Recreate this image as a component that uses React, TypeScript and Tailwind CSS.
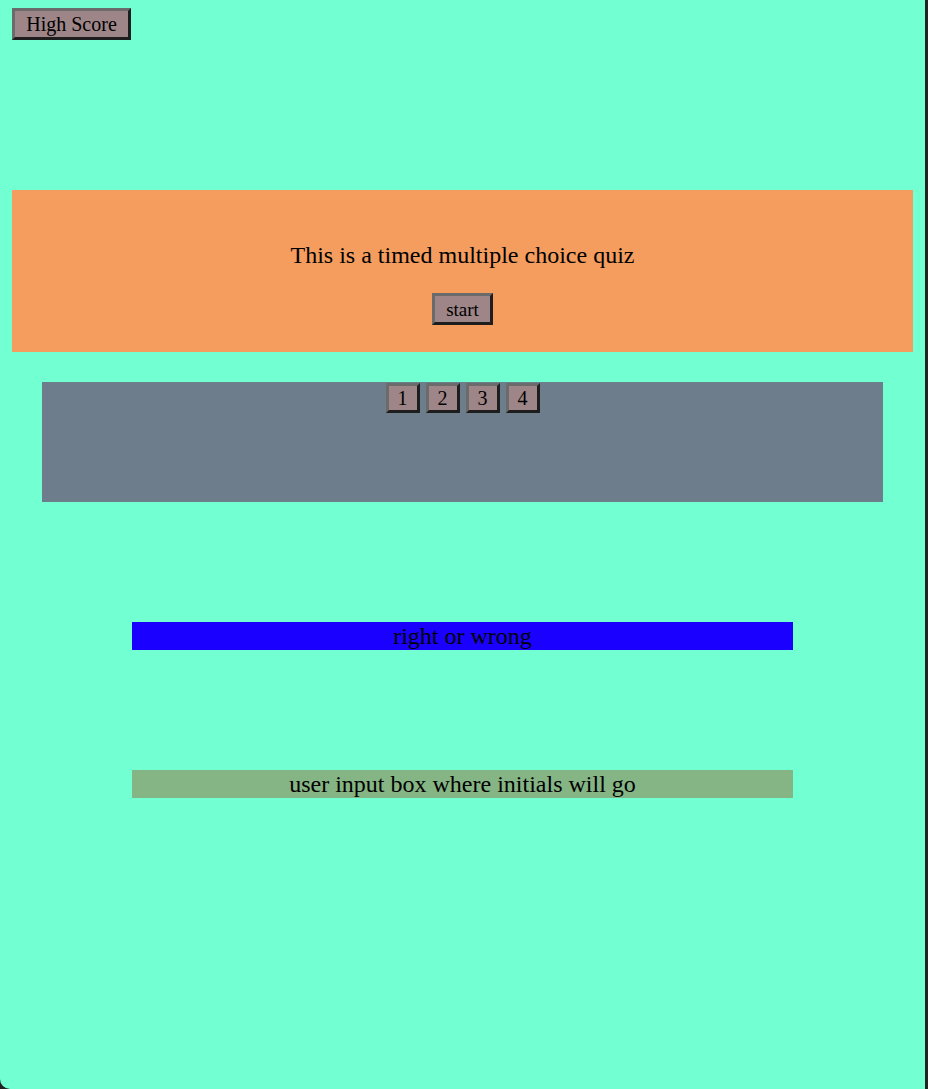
import React from "react";

const btn =
  "bg-[#9e8587] text-black border-[3px] border-t-[#6b6b6b] border-l-[#6b6b6b] border-b-[#1e1e1e] border-r-[#1e1e1e] leading-none flex items-center justify-center";

export default function App() {
  return (
    <div className="w-[928px] h-[1089px] bg-[#222] flex" style={{ fontFamily: '"Liberation Serif", "DejaVu Serif", serif' }}>
      <div className="w-[925px] h-[1089px] bg-[#72ffd1] rounded-bl-[10px] flex flex-col">
        <div className="pl-3 pt-2">
          <button className={`${btn} w-[119px] h-[32px] text-[20px]`}>High Score</button>
        </div>
        <div className="mt-[150px] mx-3 h-[162px] bg-[#f49d5f] flex flex-col items-center">
          <p className="mt-[51px] text-[24px] leading-[28px]">This is a timed multiple choice quiz</p>
          <button className={`${btn} mt-[24px] w-[61px] h-[32px] text-[19px]`}>start</button>
        </div>
        <div className="mt-[30px] mx-[42px] h-[120px] bg-[#6d7d8b] flex justify-center gap-[6px] pt-[1px]">
          {["1", "2", "3", "4"].map((n) => (
            <button key={n} className={`${btn} w-[34px] h-[30px] text-[20px]`}>{n}</button>
          ))}
        </div>
        <div className="mt-[120px] mx-[132px] h-[28px] bg-[#1a00ff] flex items-center justify-center text-[24px] leading-none">
          right or wrong
        </div>
        <div className="mt-[120px] mx-[132px] h-[28px] bg-[#85b585] flex items-center justify-center text-[24px] leading-none">
          user input box where initials will go
        </div>
      </div>
    </div>
  );
}
